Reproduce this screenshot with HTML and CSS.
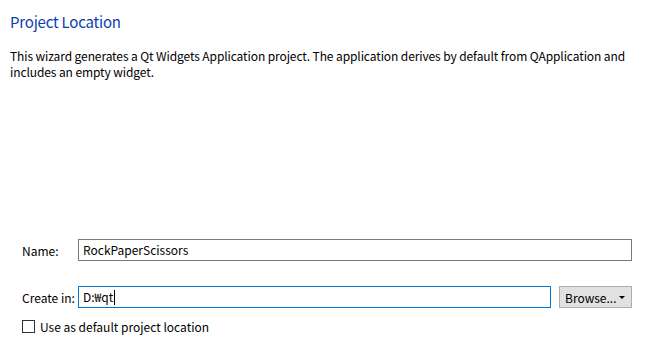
FILE: index.html
```html
<!DOCTYPE html>
<html lang="en">
<head>
    <meta charset="UTF-8">
    <meta name="viewport" content="width=device-width, initial-scale=1.0">
    <title>Project Location</title>
    <link rel="stylesheet" href="styles.css">
</head>
<body>
    <div class="page">
        <h1 class="title">Project Location</h1>
        <p class="intro">This wizard generates a Qt Widgets Application project. The application derives by default from QApplication and includes an empty widget.</p>

        <div class="form">
            <div class="row">
                <label class="label">Name:</label>
                <div class="field">RockPaperScissors</div>
            </div>

            <div class="row row-path">
                <label class="label">Create in:</label>
                <div class="field focused">D:&#8361;qt<span class="caret"></span></div>
                <button class="browse">Browse... <span class="arrow"></span></button>
            </div>

            <div class="check-row">
                <span class="checkbox"></span>
                <span>Use as default project location</span>
            </div>
        </div>
    </div>
</body>
</html>
```

FILE: styles.css
```css
html, body {
    margin: 0;
    padding: 0;
    background-color: #ffffff;
}
body {
    font-family: "Noto Sans CJK KR", "Noto Sans", sans-serif;
    font-size: 12px;
    color: #000;
}
.page {
    height: 342px;
    box-sizing: border-box;
    padding: 0 10px 0 10px;
    display: flex;
    flex-direction: column;
}
.title {
    margin: 12px 0 0 0;
    font-size: 15px;
    font-weight: normal;
    line-height: 20px;
    color: #0b3db0;
    letter-spacing: -0.2px;
}
.intro {
    margin: 16px 0 0 0;
    line-height: 16px;
    letter-spacing: -0.1px;
}
.form {
    margin-top: auto;
    padding: 0 4px 8px 12px;
}
.row {
    display: flex;
    align-items: center;
    height: 22px;
}
.row-path {
    margin-top: 25px;
}
.label {
    width: 56px;
    flex: none;
}
.field {
    flex: 1;
    height: 22px;
    box-sizing: border-box;
    border: 1px solid #7a7a7a;
    padding: 0 4px;
    line-height: 20px;
    display: flex;
    align-items: center;
}
.field.focused {
    border-color: #0078d7;
}
.caret {
    display: inline-block;
    width: 1px;
    height: 15px;
    background-color: #000;
    margin-left: 1px;
}
.browse {
    flex: none;
    margin-left: 8px;
    width: 73px;
    height: 22px;
    box-sizing: border-box;
    border: 1px solid #adadad;
    background-color: #e1e1e1;
    font-family: inherit;
    font-size: 12px;
    color: #000;
    padding: 0 6px 0 5px;
    display: flex;
    align-items: center;
    justify-content: space-between;
}
.arrow {
    width: 0;
    height: 0;
    border-left: 3px solid transparent;
    border-right: 3px solid transparent;
    border-top: 3px solid #000;
}
.check-row {
    display: flex;
    align-items: center;
    margin-top: 10px;
    height: 16px;
}
.checkbox {
    width: 13px;
    height: 13px;
    box-sizing: border-box;
    border: 1px solid #333;
    background-color: #fff;
    margin-right: 5px;
}
```
